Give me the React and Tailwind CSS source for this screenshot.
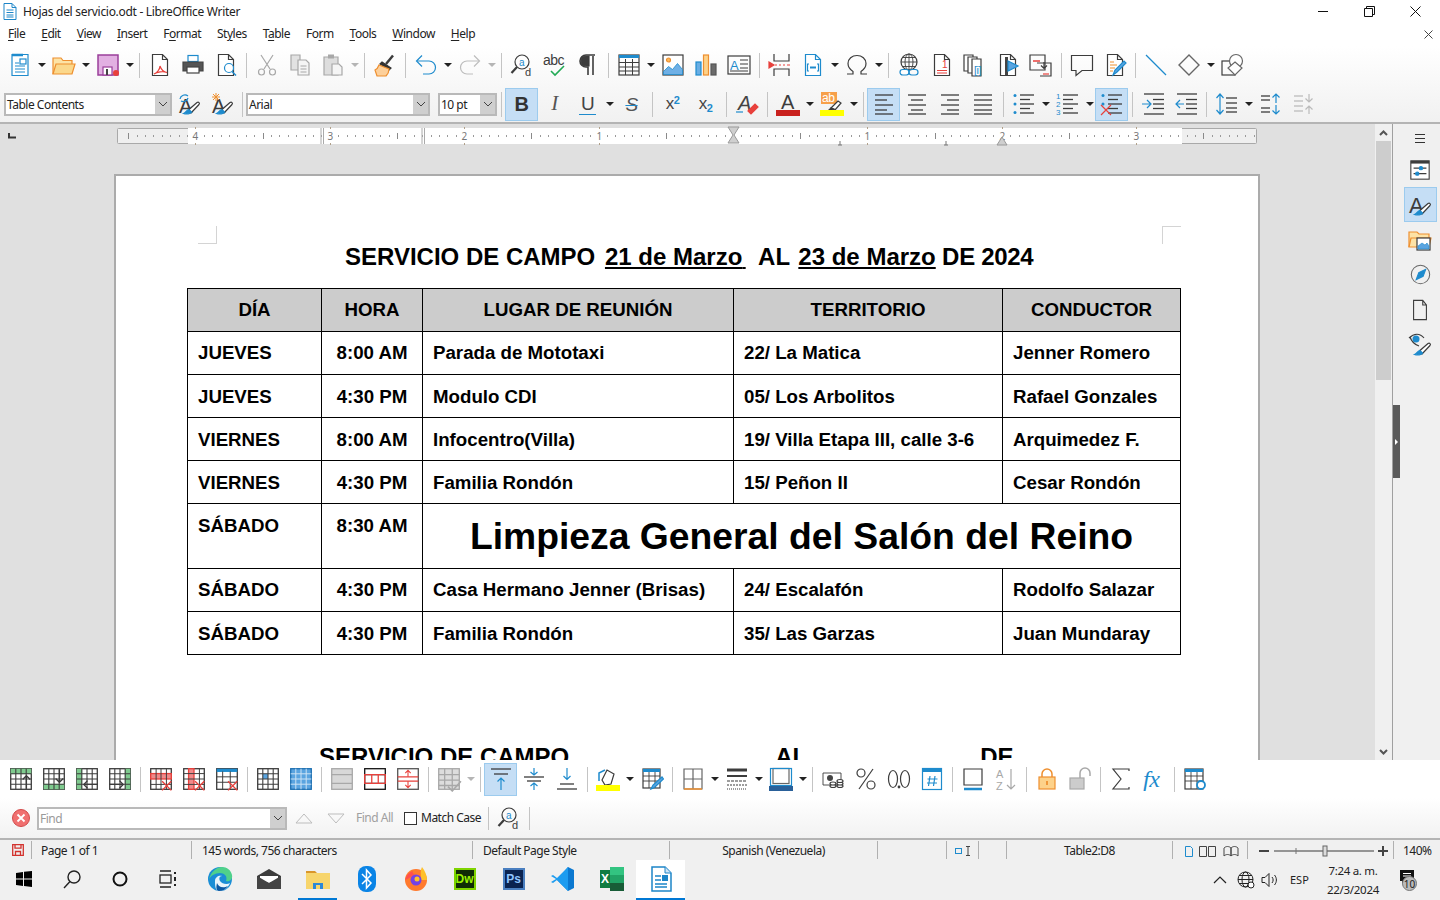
import { Fragment } from "react";

const DK = "#3c3c3c";
const BL = "#1e8bcd";
const RD = "#e8413c";
const GY = "#a8a8a8";
const OR = "#ee8f2f";

const Svg = ({ children, s = 24, box = 24 }) => (
  <svg width={s} height={s} viewBox={`0 0 ${box} ${box}`} fill="none" stroke={DK} strokeWidth="1.2">
    {children}
  </svg>
);

const Page = ({ c = DK, fill = "#fff" }) => <path d="M4.5 1.5h10l5 5v16h-15z M14.5 1.5v5h5" stroke={c} fill={fill} />;

// filas de lineas para los iconos de parrafo
const Lines = ({ rows, c = DK }) => rows.map(([a, b, y], i) => <path key={i} d={`M${a} ${y}H${b}`} stroke={c} strokeWidth="1.3" />);

const Txt = ({ x, y, size, c = DK, w = 400, children }) => (
  <text x={x} y={y} fontSize={size} fill={c} stroke="none" fontWeight={w} fontFamily="'Liberation Sans',sans-serif">{children}</text>
);

const Mag = ({ x = 0, y = 0 }) => (
  <g transform={`translate(${x} ${y})`}>
    <circle cx="12" cy="9" r="7" stroke={DK} />
    <path d="M7 14l-5.5 6" strokeWidth="2.2" />
    <Txt x="9" y="13" size="10" c={BL}>a</Txt>
    <Txt x="15" y="23" size="11">d</Txt>
  </g>
);

const Brush = () => (
  <g>
    <path d="M14 21l8-8.5c1.2-1.5-.5-3-2-2l-8 7z" stroke={DK} fill="#fff" />
    <path d="M11.5 17.5c-2 .5-2.5 3-5 4 3 1 7 .5 8-1.5z" fill={BL} stroke={BL} />
  </g>
);

const Grid = ({ children, c = DK, head }) => (
  <Svg s={26}>
    <rect x="2.5" y="2.5" width="19" height="19" fill="#fff" stroke={c} />
    {children}
    <path d="M2.5 7.2h19M2.5 12h19M2.5 16.8h19M7.2 2.5v19M12 2.5v19M16.8 2.5v19" stroke={c} strokeWidth="1" />
    {head && <rect x="2.5" y="2.5" width="19" height="3" fill={head} stroke="none" />}
  </Svg>
);

const XMark = () => <path d="M13 14l8.5 8.5M21.5 14L13 22.5" stroke={RD} strokeWidth="1.3" />;

const ic = {
  newDoc: <Svg><path d="M4 1.5h16v21H4z" stroke={BL} fill="#fff" /><path d="M4 2h11" stroke={BL} strokeWidth="2.5" /><path d="M7 10h4M7 13h10M7 16h10M7 19h10" stroke={BL} /><rect x="12" y="6" width="6" height="5" stroke={BL} /></Svg>,
  open: <Svg><path d="M1 21V5h8l2 2.5h9V11" stroke={OR} fill="#fde3a6" /><path d="M1 21l3-10h19l-3 10z" stroke={OR} fill="#fbd88c" /></Svg>,
  save: <Svg><path d="M2 2h20v20H2z" stroke="#9a3f9a" strokeWidth="1.5" fill="#e2b0e2" /><rect x="7" y="14" width="9" height="8" fill="#fff" stroke="#9a3f9a" /><rect x="10" y="16" width="2" height="6" fill="#444" stroke="none" /><circle cx="20" cy="20" r="3" fill={RD} stroke="none" /></Svg>,
  pdf: <Svg><Page /><path d="M12 13c0 3-3 7-6 8 3-2 9-3 13-1.5-3-.5-6-3.500-7-6.500z" stroke={RD} /></Svg>,
  print: <Svg><rect x="7" y="2.500" width="10" height="6" stroke={BL} fill="#fff" /><path d="M2 9h20v9H2z" fill="#555" stroke="#444" /><rect x="6" y="14" width="12" height="6" fill="#fff" stroke="#444" /></Svg>,
  preview: <Svg><Page /><circle cx="15" cy="15" r="4.500" stroke={BL} fill="#fff" /><path d="M18 18.500l4 4" stroke={BL} strokeWidth="1.500" /></Svg>,
  cut: <Svg><path d="M6 2l9 14M18 2L9 16" stroke={GY} /><circle cx="6.500" cy="19" r="3" stroke={GY} /><circle cx="17.500" cy="19" r="3" stroke={GY} /></Svg>,
  copy: <Svg><path d="M3 2h9v15H3z" stroke={GY} fill="#e2e2e2" /><path d="M10 7h8l3 3v12H10z" stroke={GY} fill="#f5f5f5" /><path d="M12.500 13h6M12.500 16h6M12.500 19h6" stroke={GY} /></Svg>,
  paste: <Svg><path d="M3 4h14v18H3z" stroke={GY} fill="#ddd" /><rect x="7" y="1.500" width="6" height="4" fill={GY} stroke="none" /><path d="M11 11h7l3 3v8H11z" stroke={GY} fill="#f5f5f5" /></Svg>,
  clone: <Svg><path d="M13 11l7-8.500" stroke={DK} strokeWidth="2.500" /><path d="M9 9l9 6-2 2-9-6z" fill="#333" stroke="#333" /><path d="M6 12c-1 3-2 4-4 5l2 6h9c2-2 3-4 3-7z" fill="#fdd09b" stroke={OR} /></Svg>,
  undo: <Svg s={24}><path d="M3 8h12a6.500 6.500 0 0 1 0 13H9" stroke={BL} /><path d="M8 2.500L2.500 8 8 13.500" stroke={BL} /></Svg>,
  redo: <Svg><path d="M21 8H9a6.500 6.500 0 0 0 0 13h6" stroke="#bdbdbd" /><path d="M16 2.500L21.500 8 16 13.500" stroke="#bdbdbd" /></Svg>,
  find: <Svg><Mag /></Svg>,
  spell: <Svg><Txt x="0" y="12" size="14">abc</Txt><path d="M8 18l4 4 9-9" stroke="#22aa55" strokeWidth="1.600" /></Svg>,
  pil: <Svg><path d="M19 2H10a6 6 0 0 0 0 12h2v8M17 3v19" strokeWidth="1.600" /><path d="M10 3a5 5 0 0 0 0 10h3V3z" fill={DK} /></Svg>,
  table: <Svg><rect x="2" y="2" width="20" height="20" /><path d="M2 3.500h20" stroke={BL} strokeWidth="3" /><path d="M2 9.500h20M2 14h20M2 18h20M8.500 6v16M15.500 6v16" strokeWidth="1" /></Svg>,
  image: <Svg><rect x="2" y="2" width="20" height="20" fill="#fff" /><circle cx="7.500" cy="7" r="2" fill="#fdbb5c" stroke={OR} /><path d="M2.500 21.500v-3l5-5 4 3 5-6 5 6v5z" fill="#6fb0e6" stroke={BL} strokeWidth=".8" /></Svg>,
  chart: <Svg><rect x="2" y="9" width="5" height="13" fill="#69aee4" stroke={BL} /><rect x="9.500" y="2" width="5" height="20" fill="#fdd28a" stroke={OR} /><rect x="17" y="11" width="5" height="11" fill="#6b6b6b" stroke="#555" /></Svg>,
  textbox: <Svg><rect x="1" y="3" width="22" height="18" /><Txt x="3" y="17" size="13" c={BL}>A</Txt><path d="M13 7h8M13 11h8M13 15h8M3 18h18" strokeWidth="1" /></Svg>,
  pbreak: <Svg><path d="M6 1v7h15V1M6 23v-7h15v7" /><path d="M7 12h2M11 12h2M15 12h2M19 12h3" stroke={RD} /><path d="M1 9l5 3-5 3z" fill={RD} stroke={RD} /></Svg>,
  field: <Svg><Page c={BL} /><path d="M8 11H6.500v7H8M16 11h1.500v7H16" stroke={BL} /><path d="M9 14.500h6" stroke={BL} strokeWidth="2" /></Svg>,
  omega: <Svg><path d="M2 21h6v-2.500C5 16.500 3 14 3 10.500 3 6 7 2.500 12 2.500S21 6 21 10.500c0 3.500-2 6-5 8V21h6" /></Svg>,
  link: <Svg><circle cx="12" cy="9" r="8" /><path d="M4 9h16M12 1v16M5.500 4.500h13M5.500 13.500h13" strokeWidth=".9" /><ellipse cx="12" cy="9" rx="4" ry="8" strokeWidth=".9" /><rect x="3" y="16.500" width="9" height="5.500" rx="2.700" stroke={BL} fill="#fff" /><rect x="12" y="16.500" width="9" height="5.500" rx="2.700" stroke={BL} fill="none" /></Svg>,
  foot: <Svg><Page /><Txt x="12" y="15" size="10" c={RD}>1</Txt><path d="M7 17.500h10M7 20h10" stroke={RD} /></Svg>,
  biblio: <Svg><path d="M1 2h9v16H1z" fill="#fff" /><path d="M5 4h9v16H5z" fill="#fff" /><path d="M9 6h9v17H9z" fill="#fff" /><Txt x="11" y="21" size="11" c={BL}>[i]</Txt></Svg>,
  xref: <Svg><Page /><rect x="9" y="4" width="3" height="18" fill="#444" stroke="none" /><path d="M12 8l10 5-10 5z" fill="#5aa4e0" stroke={BL} /></Svg>,
  bkmk: <Svg><path d="M1 2h15v15H1z" /><path d="M4 8h7" stroke={RD} strokeWidth="1.500" /><path d="M8 10h14v13H11" /><path d="M15 9v6m-3-2.500l3 3 3-3" /><path d="M14 21h6" stroke={RD} /></Svg>,
  comment: <Svg><path d="M1.500 2.500h21v15H12l-6 5v-5H1.500z" /></Svg>,
  track: <Svg><Page /><path d="M7 9h4M7 12h7M7 15h5M7 18h3" stroke={OR} /><path d="M10 22l2-5 9-9 2 2-9 9z" fill="#5aa4e0" stroke={BL} /></Svg>,
  line: <Svg><path d="M2 2l20 20" stroke={BL} /></Svg>,
  diamond: <Svg><path d="M12 2l10 10-10 10L2 12z" stroke="#666" strokeWidth="1.400" /></Svg>,
  shapes: <Svg><rect x="1" y="8" width="13" height="14" /><circle cx="15" cy="8" r="6.500" fill="#fff" stroke="#666" /><path d="M14 9l7 6-7 7-7-7z" fill="#fff" stroke="#666" /></Svg>,
  updSt: <Svg><Txt x="2" y="21" size="20">A</Txt><Brush /><path d="M3 7a5 5 0 0 1 8-3M11 6a5 5 0 0 1-7 3" stroke={BL} strokeWidth="1.300" /></Svg>,
  newSt: <Svg><Txt x="2" y="21" size="20">A</Txt><Brush /><path d="M6 1v8M2 5h8M3 2l6 6M9 2L3 8" stroke={OR} strokeWidth="1" /></Svg>,
  clear: <Svg><Txt x="3" y="18" size="20" c="#444"><tspan fontStyle="italic">A</tspan></Txt><path d="M1 20h7" stroke={BL} /><path d="M13 19l7-7 3 3-7 7z" fill={RD} stroke={RD} /></Svg>,
  color: <Svg><Txt x="5" y="17" size="20">A</Txt><rect x="0" y="18" width="24" height="6" fill="#c9211e" stroke="none" /></Svg>,
  hilite: <Svg><rect x="1" y="0" width="16" height="12" fill="#f7a04a" stroke="none" /><Txt x="2" y="10" size="12" c="#fff">ab</Txt><path d="M11 16l7-7 3 2-6 7z" fill="#fff" /><path d="M11 16l-2 2 3 0 2-1z" fill="#333" /><rect x="0" y="18" width="24" height="6" fill="#ff0" stroke="none" /></Svg>,
  left: <Svg><Lines rows={[[3, 21, 3], [3, 15, 8], [3, 21, 13], [3, 15, 18], [3, 21, 22]]} /></Svg>,
  center: <Svg><Lines rows={[[3, 21, 3], [6, 18, 8], [3, 21, 13], [6, 18, 18], [3, 21, 22]]} /></Svg>,
  right: <Svg><Lines rows={[[3, 21, 3], [9, 21, 8], [3, 21, 13], [9, 21, 18], [3, 21, 22]]} /></Svg>,
  just: <Svg><Lines rows={[[3, 21, 3], [3, 21, 8], [3, 21, 13], [3, 21, 18], [3, 21, 22]]} /></Svg>,
  bul: <Svg><circle cx="3" cy="3.500" r="1.500" fill={BL} stroke="none" /><circle cx="3" cy="12" r="1.500" fill={BL} stroke="none" /><circle cx="3" cy="20.500" r="1.500" fill={BL} stroke="none" /><Lines rows={[[8, 22, 3], [8, 18, 7.500], [8, 22, 12], [8, 18, 16.500], [8, 22, 21]]} /></Svg>,
  num: <Svg><Txt x="0" y="7" size="8" c={BL}>1</Txt><Txt x="0" y="15" size="8" c={BL}>2</Txt><Txt x="0" y="23" size="8" c={BL}>3</Txt><Lines rows={[[7, 22, 3], [7, 17, 7.500], [7, 22, 12], [7, 17, 16.500], [7, 22, 21]]} /></Svg>,
  nolist: <Svg><circle cx="3" cy="3.500" r="1.500" fill={BL} stroke="none" /><circle cx="3" cy="12" r="1.500" fill={BL} stroke="none" /><Lines rows={[[8, 22, 3], [8, 18, 7.500], [8, 22, 12], [8, 18, 16.500], [8, 22, 21]]} /><path d="M1 13l10 10M11 13L1 23" stroke={RD} /></Svg>,
  indent: <Svg><Lines rows={[[3, 23, 2], [12, 23, 7.500], [12, 23, 12], [12, 23, 16.500], [3, 23, 22]]} /><path d="M1 12h8M6 8l4 4-4 4" stroke={BL} /></Svg>,
  outdent: <Svg><Lines rows={[[3, 23, 2], [12, 23, 7.500], [12, 23, 12], [12, 23, 16.500], [3, 23, 22]]} /><path d="M10 12H2M6 8l-4 4 4 4" stroke={BL} /></Svg>,
  spacing: <Svg><Lines rows={[[11, 22, 6], [11, 22, 11], [11, 22, 16], [11, 22, 20]]} /><path d="M5 2v20M1.500 6L5 2l3.500 4M1.500 18L5 22l3.500-4" stroke={BL} /></Svg>,
  incS: <Svg><Lines rows={[[2, 11, 4], [2, 11, 8], [2, 11, 16], [2, 11, 20]]} /><path d="M17 11V2M13.500 5.500L17 2l3.500 3.500M17 13v9M13.500 18.500L17 22l3.500-3.500" stroke={BL} /></Svg>,
  decS: <Svg><Lines c="#bbb" rows={[[2, 11, 4], [2, 11, 9], [2, 11, 14], [2, 11, 19]]} /><path d="M17 2v8M13.500 6.500L17 10l3.500-3.500M17 22v-8M13.500 17.500L17 14l3.500 3.500" stroke="#bbb" /></Svg>,
  // barra de tabla
  rowUp: <Grid><rect x="2.500" y="2.500" width="19" height="5" fill="#7fcb8f" stroke="none" /><path d="M17 21V9M13.500 12.500L17 9l3.500 3.500" stroke={DK} /></Grid>,
  rowDn: <Grid><rect x="2.500" y="16.500" width="19" height="5" fill="#7fcb8f" stroke="none" /><path d="M17 3v12M13.500 11.500L17 15l3.500-3.500" stroke={DK} /></Grid>,
  colL: <Grid><rect x="2.500" y="2.500" width="5" height="19" fill="#7fcb8f" stroke="none" /><path d="M22 17H9M12.500 13.500L9 17l3.500 3.500" stroke={DK} /></Grid>,
  colR: <Grid><rect x="16.500" y="2.500" width="5" height="19" fill="#7fcb8f" stroke="none" /><path d="M2 17h13M11.500 13.500L15 17l-3.500 3.500" stroke={DK} /></Grid>,
  delRow: <Svg s={26}><rect x="2.500" y="2.500" width="19" height="19" /><rect x="2.500" y="7" width="19" height="5" fill="#f08a8a" stroke={RD} /><path d="M2.500 17h19M7.500 2.500v19M12 2.500v19M17 2.500v19" strokeWidth=".9" /><XMark /></Svg>,
  delCol: <Svg s={26}><rect x="2.500" y="2.500" width="19" height="19" /><rect x="7" y="2.500" width="5" height="19" fill="#f08a8a" stroke={RD} /><path d="M2.500 7h19M2.500 12h19M2.500 17h19M17 2.500v19" strokeWidth=".9" /><XMark /></Svg>,
  delTb: <Svg s={26}><rect x="2.500" y="2.500" width="19" height="19" /><path d="M2.500 4h19" stroke={BL} strokeWidth="3" /><path d="M2.500 10h19M2.500 15h19M8 5v17M15 5v17" strokeWidth=".9" /><XMark /></Svg>,
  selCell: <Grid><rect x="7.200" y="7.200" width="4.800" height="4.800" fill="#5aa4e0" stroke="none" /></Grid>,
  selTb: <Svg s={26}><rect x="2.500" y="2.500" width="19" height="19" fill="#5aa4e0" stroke="#1c6fb0" /><path d="M2.500 7.200h19M2.500 12h19M2.500 16.800h19M7.200 2.500v19M12 2.500v19M16.800 2.500v19" stroke="#cfe4f6" strokeWidth=".9" /></Svg>,
  merge: <Svg s={26}><rect x="2.500" y="2.500" width="19" height="19" fill="#d8d8d8" stroke={GY} /><path d="M2.500 8h19M2.500 16h19" stroke={GY} /></Svg>,
  splitC: <Svg s={26}><rect x="2.500" y="2.500" width="19" height="19" stroke="#111" /><path d="M2.500 8h19M2.500 16h19" stroke="#111" /><path d="M2.500 8h19v8h-19zM9 8v8M15 8v8" stroke={RD} /></Svg>,
  splitT: <Svg s={26}><rect x="2.500" y="2.500" width="19" height="19" stroke="#555" /><path d="M2.500 10h19M2.500 14h19" stroke={RD} /><path d="M12 10V4M9.500 6.500L12 4l2.500 2.500M12 14v6M9.500 17.500L12 20l2.500-2.500" stroke={RD} strokeWidth="1" /></Svg>,
  autoF: <Svg s={26}><rect x="2.500" y="2.500" width="19" height="19" fill="#ddd" stroke={GY} /><path d="M2.500 8h19M2.500 13h19M2.500 18h19M8 2.500v19M15 2.500v19" stroke={GY} /><path d="M11 19l4 4 8-9" stroke={GY} strokeWidth="1.500" /></Svg>,
  vTop: <Svg><Lines rows={[[2, 22, 2], [5, 19, 7]]} /><path d="M12 23V11M8.500 14.500L12 11l3.500 3.500" stroke={BL} /></Svg>,
  vMid: <Svg><Lines rows={[[2, 22, 10], [5, 19, 14]]} /><path d="M12 1v7M8.500 5L12 8l3.500-3M12 23v-7M8.500 19L12 16l3.500 3" stroke={BL} /></Svg>,
  vBot: <Svg><Lines rows={[[2, 22, 22], [5, 19, 17]]} /><path d="M12 1v11M8.500 9L12 12.500 15.500 9" stroke={BL} /></Svg>,
  fill: <Svg><path d="M6 13l5-10 7 4-3 10-6 1z" fill="#fff" stroke={DK} /><path d="M3 14V6l6-3" stroke={BL} strokeWidth="1.500" /><rect x="0" y="18" width="24" height="6" fill="#ff0" stroke="none" /></Svg>,
  tbProps: <Svg><rect x="3" y="2" width="17" height="19" /><path d="M3 3.500h17" stroke={BL} strokeWidth="3" /><path d="M3 9h17M3 14h17M9 5v16M15 5v16" strokeWidth=".9" /><path d="M11 22l2-4 9-8 1.500 2-9 8.500z" fill="#5aa4e0" stroke={BL} /></Svg>,
  border: <Svg><path d="M3 2h18v20H3z" stroke="#666" /><path d="M3 12h18M12 2v20" stroke="#666" /><path d="M3 22h18" stroke={OR} strokeWidth="1.500" /></Svg>,
  bstyle: <Svg><path d="M2 3h20" strokeWidth="3" /><path d="M2 9h20" strokeWidth="2" /><path d="M2 14h20" strokeDasharray="3 1" /><path d="M2 18h20" strokeDasharray="2 1" /><path d="M2 22h20" strokeDasharray="1 1" /></Svg>,
  bcolor: <Svg><rect x="4" y="1.500" width="16" height="15" stroke="#666" /><rect x="1.500" y="1.500" width="21" height="17" stroke={BL} /><rect x="0" y="19" width="24" height="5" fill="#2a6099" stroke="none" /></Svg>,
  numF: <Svg><path d="M2 6h18v12H2z" strokeWidth=".9" /><circle cx="9" cy="11" r="3" fill="#444" stroke="none" /><g fill="#fff"><ellipse cx="12" cy="19" rx="3" ry="1.500" /><ellipse cx="12" cy="16.500" rx="3" ry="1.500" /><ellipse cx="19" cy="19" rx="3" ry="1.500" /><ellipse cx="19" cy="16.500" rx="3" ry="1.500" /><ellipse cx="19" cy="14" rx="3" ry="1.500" /></g></Svg>,
  pct: <Svg><circle cx="7" cy="6" r="4" /><circle cx="17" cy="18" r="4" /><path d="M19 2L5 22" /></Svg>,
  dec: <Svg><ellipse cx="6" cy="12" rx="4.500" ry="8.500" /><ellipse cx="18" cy="12" rx="4.500" ry="8.500" /><circle cx="12" cy="20" r=".8" fill={DK} /></Svg>,
  numR: <Svg><rect x="2.500" y="1.500" width="19" height="21" stroke={BL} /><path d="M2.500 3.500h19" stroke={BL} strokeWidth="3" /><path d="M10 9l-1.500 10M15 9l-1.500 10M7.500 12h10M7 16h10" stroke={BL} /></Svg>,
  rHead: <Svg><path d="M3 2h18v16H3z" /><path d="M3 22h18" stroke={BL} strokeWidth="2.500" /></Svg>,
  sort: <Svg><Txt x="2" y="11" size="11" c={GY}>A</Txt><Txt x="2" y="23" size="11" c={GY}>Z</Txt><path d="M17 2v20M13 18l4 4 4-4" stroke={GY} /></Svg>,
  lock: <Svg><rect x="4" y="10" width="16" height="12" fill="#fdd28a" stroke={OR} /><path d="M7 10V7a5 5 0 0 1 10 0v3" stroke={OR} strokeWidth="1.500" /><path d="M12 14v4" stroke={OR} strokeWidth="1.800" /></Svg>,
  unlock: <Svg><rect x="2" y="11" width="14" height="11" fill="#ccc" stroke={GY} /><path d="M12 11V6a5 5 0 0 1 10 0v3" stroke={GY} strokeWidth="1.500" /></Svg>,
  sum: <Svg><path d="M20 4V2H4l8 10-8 10h16v-2" /></Svg>,
  fx: <Svg><text x="1" y="20" fontSize="24" fontStyle="italic" fontFamily="'Liberation Serif',serif" fill={BL} stroke="none">fx</text></Svg>,
  tbCfg: <Svg><rect x="2" y="2" width="18" height="20" /><path d="M2 3.500h18" stroke={BL} strokeWidth="3" /><path d="M2 9h18M2 14h18M8 5v17M14 5v17" strokeWidth=".9" /><circle cx="18" cy="18" r="4" fill="#fff" stroke={BL} strokeWidth="1.800" /></Svg>,
};

const Btn = ({ i, on, children }) => (
  <div className={`flex h-[33px] w-[33px] shrink-0 items-center justify-center ${on ? "border border-[#9ccbee] bg-[#c5def5]" : ""}`}>
    {i ? ic[i] : children}
  </div>
);

const Arrow = ({ off }) => (
  <div className="flex w-[11px] shrink-0 items-center justify-center">
    <span className={`h-0 w-0 border-x-[4px] border-t-[4px] border-x-transparent ${off ? "border-t-[#b5b5b5]" : "border-t-[#222]"}`} />
  </div>
);

const Sep = () => (
  <div className="flex w-[8px] shrink-0 items-center justify-center">
    <span className="h-[25px] w-px bg-[#c4c4c4]" />
  </div>
);

// "a" = flecha, "a-" = flecha apagada, "|" = separador
const Row = ({ items }) =>
  items.map((it, n) => (
    <Fragment key={n}>
      {it === "a" ? <Arrow /> : it === "a-" ? <Arrow off /> : it === "|" ? <Sep /> : it}
    </Fragment>
  ));

const Combo = ({ text, w, muted }) => (
  <div className={`flex h-[23px] shrink-0 items-stretch border-2 border-[#b9b9b9] bg-white ${w}`}>
    <span className={`flex-1 truncate pl-px text-[12px] leading-[19px] ${muted ? "text-[#9a9a9a]" : "text-[#222]"}`}>{text}</span>
    <span className="flex w-[15px] items-center justify-center bg-[#cfcfcf]">
      <svg width="10" height="6" viewBox="0 0 10 6" fill="none" stroke="#444"><path d="M1 1l4 4 4-4" /></svg>
    </span>
  </div>
);

// antes, letra subrayada, despues
const MENU = [
  ["", "F", "ile"], ["", "E", "dit"], ["", "V", "iew"], ["", "I", "nsert"], ["F", "o", "rmat"], ["St", "y", "les"], ["T", "a", "ble"],
  ["Fo", "r", "m"], ["", "T", "ools"], ["", "W", "indow"], ["", "H", "elp"],
];

const ROWS = [
  ["JUEVES", "8:00 AM", "Parada de Mototaxi", "22/ La Matica", "Jenner Romero"],
  ["JUEVES", "4:30 PM", "Modulo CDI", "05/ Los Arbolitos", "Rafael Gonzales"],
  ["VIERNES", "8:00 AM", "Infocentro(Villa)", "19/ Villa Etapa III, calle 3-6", "Arquimedez F."],
  ["VIERNES", "4:30 PM", "Familia Rondón", "15/ Peñon II", "Cesar Rondón"],
  ["SÁBADO", "8:30 AM"],
  ["SÁBADO", "4:30 PM", "Casa Hermano Jenner (Brisas)", "24/ Escalafón", "Rodolfo Salazar"],
  ["SÁBADO", "4:30 PM", "Familia Rondón", "35/ Las Garzas", "Juan Mundaray"],
];

const Ruler = () => {
  const ticks = [];
  for (let i = -72; i <= 62; i++) ticks.push(i);
  return (
    <svg width="1375" height="22" className="block">
      <rect x="117.500" y="4.500" width="1139" height="15" rx="1" fill="#efefef" stroke="#a9a9a9" />
      <rect x="188" y="4" width="994" height="16" fill="#fff" />
      {ticks.map((i) => {
        const x = Math.round(733 + i * 8.4);
        if (i === 0) return null;
        if (i % 16 === 0) {
          return (
            <g key={i}>
              <path d={`M${x + 0.5} 3v2M${x + 0.5} 19v2`} stroke="#b0a08a" />
              <text x={x} y="16" textAnchor="middle" fontSize="10" fill="#777" fontFamily="'Noto Sans',sans-serif">{Math.abs(i / 16)}</text>
            </g>
          );
        }
        if (i % 8 === 0) return <path key={i} d={`M${x + 0.5} 9v6`} stroke="#8a8a8a" />;
        return <path key={i} d={`M${x + 0.5} 11v2`} stroke="#9a9a9a" />;
      })}
      <path d="M321 4v16M323.500 4v16M422 4v16M424.500 4v16" stroke="#aaa" />
      <path d="M728 3h11l-5 8 5 8h-11l5-8z" fill="#cfcfcf" stroke="#999" />
      <path d="M997 21l5-8 5 8z" fill="#cfcfcf" stroke="#999" />
      <path d="M840 17v4M838 21h4M946 17v4M944 21h4" stroke="#777" />
    </svg>
  );
};

const StatusCell = ({ w, pl, center, children }) => (
  <div className={`flex h-[18px] shrink-0 items-center whitespace-nowrap border-l border-[#b0b0b0] pt-[2px] ${w} ${pl} ${center ? "justify-center" : ""}`}>
    {children}
  </div>
);

const tkIcons = [
  <svg width="18" height="18" viewBox="0 0 18 18" fill="#000"><path d="M1 3l7-1v6.500H1zM9 1.800L17 1v7.500H9zM1 9.500h7V16l-7-1zM9 9.500h8V17l-8-1z" /></svg>,
  <svg width="20" height="20" viewBox="0 0 20 20" fill="none" stroke="#222" strokeWidth="1.400"><circle cx="12" cy="8" r="6" /><path d="M8 12.500L2 19" /></svg>,
  <svg width="16" height="16" viewBox="0 0 16 16" fill="none" stroke="#111" strokeWidth="2"><circle cx="8" cy="8" r="6.500" /></svg>,
  <svg width="18" height="18" viewBox="0 0 18 18" fill="none" stroke="#222" strokeWidth="1.300"><path d="M1 1h11M1 17h11" /><rect x="1" y="5" width="11" height="8" /><path d="M16 2v2M16 7v4M16 14v2" strokeWidth="2" /></svg>,
  <svg width="26" height="26" viewBox="0 0 26 26"><circle cx="13" cy="13" r="12" fill="#1b8ed6" /><path d="M2 14C3 7 9 1 15 1c5 0 9 3 10 8 1 5-3 7-6 6 2-5-2-8-6-8-5 0-10 3-11 7z" fill="#4fd18b" /><path d="M8 15c0-4 4-6 7-5-3 0-3 3-2 5 2 3 7 4 10 2-2 5-6 8-11 8-4 0-4-7-4-10z" fill="#fff" opacity=".9" /><path d="M10 17c1 3 5 6 11 3-2 3-5 5-9 5-3 0-3-4-2-8z" fill="#0c59a4" /></svg>,
  <svg width="24" height="24" viewBox="0 0 24 24"><path d="M0 9l12-7 12 7v13H0z" fill="#3d3d3d" /><path d="M3 9h18v4l-9 3-9-3z" fill="#fff" /><path d="M0 9l12 7 12-7v13H0z" fill="#444" /></svg>,
  <svg width="24" height="24" viewBox="0 0 24 24"><path d="M0 4h9l2 2H0z" fill="#d9962a" /><rect x="0" y="6" width="24" height="16" fill="#f7d56c" /><path d="M7 16h10v6H7z" fill="#2b88d8" /><rect x="10" y="18" width="4" height="4" fill="#f7d56c" /></svg>,
  <svg width="18" height="26" viewBox="0 0 18 26"><rect x="0" y="0" width="18" height="26" rx="8" fill="#0a84e6" /><path d="M4 8l9 9-4.500 5V4L13 9l-9 9" stroke="#fff" strokeWidth="1.500" fill="none" /></svg>,
  <svg width="24" height="26" viewBox="0 0 24 26"><circle cx="12" cy="14" r="11" fill="#ff7a2d" /><path d="M18 1c3 4 5 8 5 13h-6c0-5-1-9 1-13z" fill="#ffc02b" /><path d="M1 14C3 8 6 6 9 5c-1 2 0 3 2 3-3 2-5 4-10 6z" fill="#ff4f4f" /><circle cx="12" cy="14" r="5.500" fill="#7542e5" /><circle cx="13" cy="13" r="2.500" fill="#ffc02b" /></svg>,
  <div className="flex h-[22px] w-[22px] items-center justify-center border-2 border-[#7fd300] bg-[#0f2b05] text-[12px] font-bold leading-none text-[#9bf200]">Dw</div>,
  <div className="flex h-[22px] w-[22px] items-center justify-center border-2 border-[#4a7fc0] bg-[#0a2350] text-[12px] font-bold leading-none text-[#8fc4ff]">Ps</div>,
  <svg width="26" height="26" viewBox="0 0 26 26"><path d="M18 1l6 3v18l-6 3L7 14z" fill="#0b78d0" /><path d="M18 1L7 12 3 9 1 10l5 3-5 3 2 1 4-3 11 11z" fill="#1d9cf0" /></svg>,
  <div className="flex h-[24px] w-[24px] items-center"><div className="flex h-[18px] w-[12px] items-center justify-center bg-[#107c41] text-[12px] font-bold leading-none text-white">X</div><div className="grid h-[24px] w-[15px] -ml-px grid-cols-1 grid-rows-3 bg-[#21a366]"><span className="bg-[#33c481]" /><span /><span className="bg-[#185c37]" /></div></div>,
  <svg width="22" height="26" viewBox="0 0 22 26"><path d="M2 1h13l6 6v18H2z" fill="#fff" stroke="#1c85c8" strokeWidth="1.500" /><path d="M15 1v6h6" fill="#cfe4f6" stroke="#1c85c8" /><path d="M5 10h6M5 14h6M5 18h12M5 21h12" stroke="#1c85c8" strokeWidth="1.300" /><rect x="12" y="9" width="6" height="6" fill="#1c85c8" /></svg>,
];

export default function App() {
  return (
    <div className="flex h-[900px] w-[1440px] flex-col overflow-hidden bg-white font-['Noto_Sans',sans-serif] text-[12px] tracking-[-0.5px] text-[#222]">
      {/* titulo */}
      <div className="flex h-[22px] shrink-0 items-center bg-white">
        <div className="ml-[3px] flex w-[20px]">
          <svg width="14" height="17" viewBox="0 0 14 17" fill="none" stroke="#1c85c8"><path d="M1 .5h8l4 4v12H1z M9 .5v4h4M3.500 7h7M3.500 9.500h7M3.500 12h7M3.500 14h7" /></svg>
        </div>
        <span className="pt-[2px] text-[12px] leading-none tracking-[-0.3px]">Hojas del servicio.odt - LibreOffice Writer</span>
        <div className="ml-auto mr-[2px] flex items-center">
          <div className="flex w-[46px] justify-center"><span className="h-px w-[10px] bg-[#111]" /></div>
          <div className="flex w-[46px] justify-center">
            <svg width="11" height="11" viewBox="0 0 11 11" fill="none" stroke="#111"><path d="M.5 2.500h8v8h-8zM2.500 2.500v-2h8v8h-2" /></svg>
          </div>
          <div className="flex w-[46px] justify-center">
            <svg width="11" height="11" viewBox="0 0 11 11" fill="none" stroke="#111"><path d="M.5.500l10 10M10.500.500l-10 10" /></svg>
          </div>
        </div>
      </div>

      {/* menu */}
      <div className="flex h-[24px] shrink-0 items-center pl-[8px]">
        <div className="flex gap-[16px] text-[12px]">
          {MENU.map((m, i) => (
            <span key={i}>{m[0]}<span className="underline underline-offset-2">{m[1]}</span>{m[2]}</span>
          ))}
        </div>
        <svg className="ml-auto mr-[7px]" width="9" height="9" viewBox="0 0 9 9" fill="none" stroke="#444"><path d="M.5.500l8 8M8.500.500l-8 8" /></svg>
      </div>

      {/* barras de herramientas */}
      <div className="shrink-0 border-b-2 border-[#b4b4b4] bg-gradient-to-b from-white to-[#f1f1f1]">
        <div className="flex h-[38px] items-center pl-[3px]">
          <Row items={[
            <Btn i="newDoc" />, "a", <Btn i="open" />, "a", <Btn i="save" />, "a", "|", <Btn i="pdf" />, <Btn i="print" />, <Btn i="preview" />, "|",
            <Btn i="cut" />, <Btn i="copy" />, <Btn i="paste" />, "a-", "|", <Btn i="clone" />, "|", <Btn i="undo" />, "a", <Btn i="redo" />, "a-", "|",
            <Btn i="find" />, <Btn i="spell" />, <Btn i="pil" />, "|", <Btn i="table" />, "a", <Btn i="image" />, <Btn i="chart" />, <Btn i="textbox" />, "|",
            <Btn i="pbreak" />, <Btn i="field" />, "a", <Btn i="omega" />, "a", "|", <Btn i="link" />, <Btn i="foot" />, <Btn i="biblio" />, <Btn i="xref" />, <Btn i="bkmk" />, "|",
            <Btn i="comment" />, <Btn i="track" />, "|", <Btn i="line" />, <Btn i="diamond" />, "a", <Btn i="shapes" />,
          ]} />
        </div>
        <div className="flex h-[38px] items-center pl-[4px] pt-[2px]">
          <Combo text="Table Contents" w="w-[168px]" />
          <Row items={[<Btn i="updSt" />, <Btn i="newSt" />, "|"]} />
          <Combo text="Arial" w="w-[184px]" />
          <div className="w-[8px]" />
          <Combo text="10 pt" w="w-[59px]" />
          <Row items={[
            "|",
            <Btn on><span className="font-['Liberation_Sans',sans-serif] text-[20px] font-bold text-[#333]">B</span></Btn>,
            <Btn><span className="font-['Liberation_Serif',serif] text-[21px] italic text-[#555]">I</span></Btn>,
            <Btn><span className="border-b border-[#1e8bcd] px-[2px] font-['Liberation_Sans',sans-serif] text-[19px] leading-[20px] text-[#444]">U</span></Btn>,
            "a",
            <Btn><span className="font-['Liberation_Sans',sans-serif] text-[19px] italic leading-none text-[#555] line-through decoration-[#1e8bcd] decoration-1">S</span></Btn>,
            "|",
            <Btn><span className="font-['Liberation_Sans',sans-serif] text-[17px] text-[#444]">x<sup className="text-[11px] font-bold text-[#1e8bcd]">2</sup></span></Btn>,
            <Btn><span className="font-['Liberation_Sans',sans-serif] text-[17px] text-[#444]">x<sub className="text-[11px] font-bold text-[#1e8bcd]">2</sub></span></Btn>,
            "|", <Btn i="clear" />, "|", <Btn i="color" />, "a", <Btn i="hilite" />, "a", "|",
            <Btn i="left" on />, <Btn i="center" />, <Btn i="right" />, <Btn i="just" />, "|",
            <Btn i="bul" />, "a", <Btn i="num" />, "a", <Btn i="nolist" on />, "|", <Btn i="indent" />, <Btn i="outdent" />, "|",
            <Btn i="spacing" />, "a", <Btn i="incS" />, <Btn i="decS" />,
          ]} />
        </div>
      </div>

      {/* zona central */}
      <div className="flex h-[636px] shrink-0 overflow-hidden bg-[#e0e0e0]">
        <div className="flex w-[1375px] shrink-0 flex-col overflow-hidden">
          <div className="relative h-[22px] shrink-0">
            <Ruler />
            <svg className="absolute left-[8px] top-[9px]" width="8" height="6" fill="none" stroke="#333" strokeWidth="2"><path d="M1 0v4.500h7" /></svg>
          </div>
          <div className="pl-[114px] pt-[28px]">
            <div className="relative h-[800px] w-[1146px] border-2 border-[#ababab] bg-white pt-[67px] font-['Liberation_Sans',sans-serif] font-bold tracking-normal text-black">
              <span className="absolute left-[82px] top-[50px] h-[18px] w-[19px] border-b border-r border-[#d4d4d4]" />
              <span className="absolute left-[1046px] top-[50px] h-[18px] w-[19px] border-l border-t border-[#d4d4d4]" />
              <div className="h-[45px] whitespace-pre pl-[229px] text-[24px] leading-[28px]">
                SERVICIO DE CAMPO <span className="ml-[3px] underline">21 de Marzo<span className="text-[12px]"> </span></span>  AL <span className="ml-[2px] underline">23 de Marzo</span><span className="tracking-[-0.3px]"> DE 2024</span>
              </div>
              <table className="ml-[71px] w-[993px] table-fixed border-collapse text-[18.7px] leading-[22px]">
                <colgroup>
                  <col className="w-[134px]" />
                  <col className="w-[101px]" />
                  <col className="w-[311px]" />
                  <col className="w-[269px]" />
                  <col className="w-[178px]" />
                </colgroup>
                <thead>
                  <tr className="h-[43px] bg-[#cccccc]">
                    {["DÍA", "HORA", "LUGAR DE REUNIÓN", "TERRITORIO", "CONDUCTOR"].map((h) => (
                      <th key={h} className="border border-black text-center font-bold">{h}</th>
                    ))}
                  </tr>
                </thead>
                <tbody>
                  {ROWS.map((r, i) =>
                    r.length === 2 ? (
                      <tr key={i} className="h-[65px]">
                        <td className="border border-black pl-[10px] pt-[11px] align-top">{r[0]}</td>
                        <td className="border border-black pt-[11px] text-center align-top">{r[1]}</td>
                        <td colSpan={3} className="border border-black text-center text-[37.3px] leading-[40px]">Limpieza General del Salón del Reino</td>
                      </tr>
                    ) : (
                      <tr key={i} className={`h-[43px] ${i === 0 || i === 5 ? "" : "[&>td]:pt-[2px]"}`}>
                        <td className="border border-black pl-[10px]">{r[0]}</td>
                        <td className="border border-black text-center">{r[1]}</td>
                        <td className="border border-black pl-[10px]">{r[2]}</td>
                        <td className="border border-black pl-[10px]">{r[3]}</td>
                        <td className="border border-black pl-[10px]">{r[4]}</td>
                      </tr>
                    )
                  )}
                </tbody>
              </table>
              <div className="mt-[88px] flex pl-[203px] text-[24px] leading-[28px]">
                <span>SERVICIO DE CAMPO</span>
                <span className="ml-[206px]">AL</span>
                <span className="ml-[173px]">DE</span>
              </div>
            </div>
          </div>
        </div>

        {/* scroll vertical */}
        <div className="flex w-[17px] shrink-0 flex-col bg-[#f0f0f0]">
          <div className="flex h-[17px] shrink-0 items-center justify-center">
            <svg width="9" height="6" viewBox="0 0 9 6" fill="none" stroke="#555" strokeWidth="2"><path d="M1 5l3.500-3.500L8 5" /></svg>
          </div>
          <div className="mx-px h-[239px] shrink-0 bg-[#cdcdcd]" />
          <div className="flex-1" />
          <div className="flex h-[17px] shrink-0 items-center justify-center">
            <svg width="9" height="6" viewBox="0 0 9 6" fill="none" stroke="#555" strokeWidth="2"><path d="M1 1l3.500 3.500L8 1" /></svg>
          </div>
        </div>

        {/* panel lateral */}
        <div className="relative flex w-[48px] shrink-0 flex-col items-center border-l border-[#a0a0a0] bg-[#f0f0f0] pl-[7px]">
          <div className="absolute left-0 top-[281px] flex h-[73px] w-[7px] items-center justify-center bg-[#5a5a5a]">
            <span className="h-0 w-0 border-y-[3px] border-l-[3px] border-y-transparent border-l-white" />
          </div>
          <div className="flex h-[28px] items-center">
            <svg width="12" height="9" viewBox="0 0 12 9" stroke="#333"><path d="M1 .500h10M1 4.500h10M1 8.500h10" /></svg>
          </div>
          <div className="flex h-[35px] w-[33px] items-center justify-center">
            <Svg s={22}><rect x="2" y="2" width="20" height="20" fill="#fff" /><path d="M2 3.500h20" strokeWidth="3" /><path d="M5 10h14M5 16h14" /><circle cx="13" cy="10" r="1.800" fill={BL} stroke={BL} /><circle cx="9" cy="16" r="1.800" fill={BL} stroke={BL} /></Svg>
          </div>
          <div className="flex h-[35px] w-[33px] items-center justify-center border border-[#9ccbee] bg-[#c5def5]">
            <Svg><Txt x="1" y="20" size="22">A</Txt><Brush /></Svg>
          </div>
          <div className="flex h-[35px] w-[33px] items-center justify-center">
            <Svg><path d="M1 19V4h8l2 2h10v4" stroke={OR} fill="#fde3a6" /><path d="M1 19l2-9h20l-2 9z" stroke={OR} fill="#fde3a6" /><rect x="9" y="10" width="13" height="12" fill="#fff" /><path d="M10 21v-3l4-3 3 2 2-2 2 3v3z" fill="#5aa4e0" stroke={BL} strokeWidth=".6" /></Svg>
          </div>
          <div className="flex h-[35px] w-[33px] items-center justify-center">
            <Svg s={21}><circle cx="12" cy="12" r="10.500" stroke="#666" /><path d="M18 6l-3 8-8 4 3-8z" fill={BL} stroke={BL} /></Svg>
          </div>
          <div className="flex h-[35px] w-[33px] items-center justify-center">
            <Svg s={22}><path d="M5 1.500h10l4 5v16H5z M15 1.500v5h4" /></Svg>
          </div>
          <div className="flex h-[35px] w-[33px] items-center justify-center">
            <Svg><path d="M1 5c5-5 11-5 15 0" /><circle cx="8" cy="6" r="3.500" fill={BL} stroke="none" /><path d="M2 4c2 6 6 8 9 9" /><Brush /></Svg>
          </div>
        </div>
      </div>

      {/* barra de tabla */}
      <div className="flex h-[38px] shrink-0 items-center bg-white pl-[4px]">
        <Row items={[
          <Btn i="rowUp" />, <Btn i="rowDn" />, <Btn i="colL" />, <Btn i="colR" />, "|", <Btn i="delRow" />, <Btn i="delCol" />, <Btn i="delTb" />, "|",
          <Btn i="selCell" />, <Btn i="selTb" />, "|", <Btn i="merge" />, <Btn i="splitC" />, <Btn i="splitT" />, "|", <Btn i="autoF" />, "a-", "|",
          <Btn i="vTop" on />, <Btn i="vMid" />, <Btn i="vBot" />, "|", <Btn i="fill" />, "a", <Btn i="tbProps" />, "|",
          <Btn i="border" />, "a", <Btn i="bstyle" />, "a", <Btn i="bcolor" />, "a", "|", <Btn i="numF" />, <Btn i="pct" />, <Btn i="dec" />, <Btn i="numR" />, "|",
          <Btn i="rHead" />, <Btn i="sort" />, "|", <Btn i="lock" />, <Btn i="unlock" />, "|", <Btn i="sum" />, <Btn i="fx" />, "|", <Btn i="tbCfg" />,
        ]} />
      </div>

      {/* buscar */}
      <div className="flex h-[42px] shrink-0 items-center border-b-2 border-[#b4b4b4] bg-gradient-to-b from-white to-[#f2f2f2] pl-[12px]">
        <svg width="18" height="18" viewBox="0 0 18 18">
          <circle cx="9" cy="9" r="8.500" fill="#f07070" stroke="#d24a4a" />
          <path d="M5.500 5.500l7 7M12.500 5.500l-7 7" stroke="#fff" strokeWidth="1.800" />
        </svg>
        <div className="w-[7px]" />
        <Combo text="Find" w="w-[250px]" muted />
        <div className="flex w-[26px] justify-end">
          <svg width="18" height="11" viewBox="0 0 18 11" fill="none" stroke="#bdbdbd"><path d="M1 10L9 1l8 9z" /></svg>
        </div>
        <div className="flex w-[32px] justify-end">
          <svg width="18" height="11" viewBox="0 0 18 11" fill="none" stroke="#bdbdbd"><path d="M1 1l8 9 8-9z" /></svg>
        </div>
        <span className="ml-[11px] w-[48px] whitespace-nowrap text-[12px] text-[#a0a0a0]">Find All</span>
        <span className="h-[13px] w-[13px] border border-[#333] bg-white" />
        <span className="ml-[4px] w-[67px] whitespace-nowrap text-[12px]">Match Case</span>
        <span className="h-[23px] w-px bg-[#c4c4c4]" />
        <div className="flex w-[40px] justify-center"><Svg><Mag /></Svg></div>
        <span className="h-[23px] w-px bg-[#c4c4c4]" />
      </div>

      {/* estado */}
      <div className="flex h-[20px] shrink-0 items-center bg-[#f0f0f0] pl-[12px] text-[12px]">
        <div className="w-[19px]">
          <svg width="12" height="12" viewBox="0 0 12 12" fill="none" stroke="#d2322d" strokeWidth="1.300"><path d="M.7.700h10.600v10.600H.7zM3 .700v3.500h6V.700M3.500 11V7.500h5V11" /></svg>
        </div>
        <StatusCell w="w-[160px]" pl="pl-[9px]">Page 1 of 1</StatusCell>
        <StatusCell w="w-[281px]" pl="pl-[10px]">145 words, 756 characters</StatusCell>
        <StatusCell w="w-[197px]" pl="pl-[10px]">Default Page Style</StatusCell>
        <StatusCell w="w-[208px]" center>Spanish (Venezuela)</StatusCell>
        <StatusCell w="w-[69px]" />
        <StatusCell w="w-[32px]" pl="pl-[8px]">
          <svg width="20" height="10" viewBox="0 0 20 10" fill="none"><rect x=".5" y="2.500" width="6" height="5" stroke="#1e8bcd" /><path d="M11 .500h4M13 .500v9M11 9.500h4" stroke="#444" /></svg>
        </StatusCell>
        <StatusCell w="w-[28px]" />
        <StatusCell w="w-[166px]" center>Table2:D8</StatusCell>
        <StatusCell w="w-[75px]" pl="pl-[12px]">
          <svg width="56" height="11" viewBox="0 0 56 11" fill="none" stroke="#444"><path d="M.5.500h5l2 2v8h-7z" stroke="#1e8bcd" /><path d="M14.500.500h7v10h-7zM23.500.500h7v10h-7z" /><path d="M39 2c2-2 5-2 7 0v8c-2-2-5-2-7 0zM46 2c2-2 5-2 7 0v8c-2-2-5-2-7 0z" /></svg>
        </StatusCell>
        <StatusCell w="w-[146px]" pl="pl-[11px]">
          <svg width="130" height="12" viewBox="0 0 130 12" fill="none" stroke="#444"><path d="M0 6h10" strokeWidth="2" /><path d="M15 6h100" stroke="#777" strokeWidth="1.500" /><path d="M37 3v6" stroke="#777" /><rect x="64" y="1" width="4" height="10" fill="#ddd" stroke="#666" /><path d="M119 6h10M124 1v10" strokeWidth="2" /></svg>
        </StatusCell>
        <StatusCell w="w-[47px]" pl="pl-[9px]">140%</StatusCell>
      </div>

      {/* barra de tareas */}
      <div className="flex h-[40px] shrink-0 items-stretch bg-[#f0f0f0] font-['Liberation_Sans',sans-serif] tracking-normal">
        {tkIcons.map((icon, i) => (
          <div
            key={i}
            className={`flex items-center justify-center border-b-2 ${i < 4 ? "w-[48px]" : i === 6 ? "mx-[5px] w-[39px]" : "w-[49px]"} ${i === 4 ? "ml-[3px]" : ""} ${i === 13 ? "border-[#0078d4] bg-white" : i === 6 ? "border-[#0078d4]" : "border-transparent"}`}
          >
            {icon}
          </div>
        ))}
        <div className="ml-auto flex items-center font-['Noto_Sans',sans-serif] text-[12px]">
          <svg width="14" height="8" viewBox="0 0 14 8" fill="none" stroke="#222" strokeWidth="1.200"><path d="M1 7l6-6 6 6" /></svg>
          <svg className="ml-[10px]" width="18" height="18" viewBox="0 0 18 18" fill="none" stroke="#222"><circle cx="8.500" cy="8.500" r="7.500" /><ellipse cx="8.500" cy="8.500" rx="3.500" ry="7.500" /><path d="M1 8.500h15M2 4.500h13M2 12.500h13" /><circle cx="14" cy="14" r="3" fill="#fff" /></svg>
          <svg className="ml-[6px]" width="18" height="16" viewBox="0 0 18 16" fill="none" stroke="#222"><path d="M1 5.500h3l4-4v13l-4-4H1zM11 5c1.500 2 1.500 4 0 6M13.500 3c2.500 3 2.500 7 0 10" /></svg>
          <span className="ml-[11px] w-[30px] text-[11px]">ESP</span>
          <div className="flex w-[66px] flex-col items-center text-[11.5px] leading-[19px] tracking-[-0.3px]">
            <span>7:24 a. m.</span>
            <span>22/3/2024</span>
          </div>
          <div className="relative ml-[7px] mr-[23px] h-[22px] w-[24px]">
            <svg width="16" height="16" viewBox="0 0 16 16" className="absolute left-[6px] top-0"><path d="M1 1h14v11H6l-3 3v-3H1z" fill="#111" /><path d="M4 4.500h8M4 7h8" stroke="#fff" /></svg>
            <span className="absolute left-[9px] top-[7px] flex h-[15px] w-[15px] items-center justify-center rounded-full border border-[#777] bg-[#bbb] text-[10px] leading-none">10</span>
          </div>
        </div>
      </div>
    </div>
  );
}
